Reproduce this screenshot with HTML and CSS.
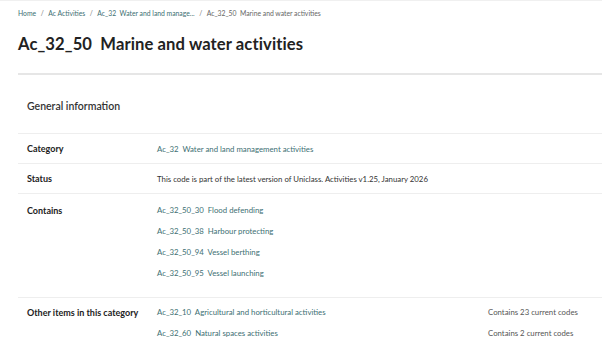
FILE: index.html
```html
<!DOCTYPE html>
<html>
<head>
<meta charset="utf-8">
<link rel="stylesheet" href="styles.css">
</head>
<body>
<div class="page">
  <nav class="crumbs">
    <a href="#">Home</a><span class="sep">/</span>
    <a href="#">Ac Activities</a><span class="sep">/</span>
    <a href="#">Ac_32&nbsp; Water and land manage...</a><span class="sep">/</span>
    <span class="current">Ac_32_50&nbsp; Marine and water activities</span>
  </nav>
  <h1 class="title">Ac_32_50&nbsp; Marine and water activities</h1>
  <section class="info">
    <h2 class="info-head">General information</h2>
    <div class="row">
      <div class="label">Category</div>
      <div class="values"><a href="#">Ac_32&nbsp; Water and land management activities</a></div>
    </div>
    <div class="row">
      <div class="label">Status</div>
      <div class="values"><span class="plain">This code is part of the latest version of Uniclass. Activities v1.25, January 2026</span></div>
    </div>
    <div class="row row-list">
      <div class="label">Contains</div>
      <div class="values list">
        <a href="#">Ac_32_50_30&nbsp; Flood defending</a>
        <a href="#">Ac_32_50_38&nbsp; Harbour protecting</a>
        <a href="#">Ac_32_50_94&nbsp; Vessel berthing</a>
        <a href="#">Ac_32_50_95&nbsp; Vessel launching</a>
      </div>
    </div>
    <div class="row row-list last">
      <div class="label">Other items in this category</div>
      <div class="values list">
        <div class="pair"><a href="#">Ac_32_10&nbsp; Agricultural and horticultural activities</a><span class="count">Contains 23 current codes</span></div>
        <div class="pair"><a href="#">Ac_32_60&nbsp; Natural spaces activities</a><span class="count">Contains 2 current codes</span></div>
      </div>
    </div>
  </section>
</div>
</body>
</html>
```
FILE: styles.css
```css
* { box-sizing: border-box; margin: 0; padding: 0; }
html, body { background: #fff; }
body {
  font-family: Lato, "Noto Sans", sans-serif;
  color: #222;
  overflow: hidden;
}
.page {
  padding-left: 18px;
  border-top: 1px solid #f0f0f0;
}
a { color: #3d6f73; text-decoration: none; }
.crumbs {
  font-size: 6.8px;
  padding-top: 4px;
  height: 20px;
  display: flex;
  align-items: center;
  white-space: nowrap;
}
.crumbs .sep { color: #777; margin: 0 4.5px; }
.crumbs .current { color: #666; }
.title {
  font-size: 16.6px;
  font-weight: 700;
  color: #222;
  padding-top: 13px;
  height: 54px;
  border-bottom: 2px solid #e6e6e6;
  letter-spacing: 0.1px;
}
.info-head {
  font-size: 10.5px;
  font-weight: 600;
  color: #333;
  padding: 4px 9px 0;
  height: 59px;
  display: flex;
  align-items: center;
  border-bottom: 1px solid #eeeeee;
}
.row {
  display: grid;
  grid-template-columns: 130px 1fr;
  padding-left: 9px;
  height: 30px;
  align-items: center;
  border-bottom: 1px solid #eeeeee;
  font-size: 7.8px;
}
.label { font-weight: 700; font-size: 9px; color: #222; }
.plain { color: #333; }
.row-list { height: auto; align-items: start; padding: 11px 0 19px 9px; }
.row.last { border-bottom: none; padding-top: 9px; }
.list { display: flex; flex-direction: column; gap: 11px; }
.list > a, .pair { line-height: 10px; display: block; }
.pair { display: grid; grid-template-columns: 331px 1fr; }
.count { color: #555; }
```
